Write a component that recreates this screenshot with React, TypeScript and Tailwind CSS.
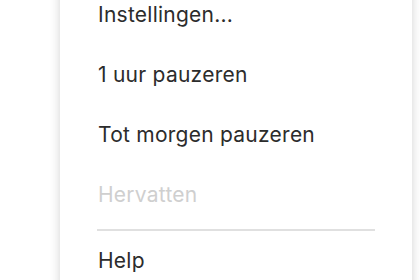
import React from "react";

const items = [
  { label: "Instellingen...", disabled: false },
  { label: "1 uur pauzeren", disabled: false },
  { label: "Tot morgen pauzeren", disabled: false },
  { label: "Hervatten", disabled: true },
];

const MenuItem = ({ label, disabled }: { label: string; disabled?: boolean }) => (
  <div
    className={`h-[60px] flex items-center pl-[38px] text-[21px] tracking-[0.25px] ${
      disabled ? "text-[#cfcfcf]" : "text-[#2c2c2c]"
    }`}
  >
    {label}
  </div>
);

export default function App() {
  return (
    <div
      className="w-[420px] h-[280px] overflow-hidden bg-white"
      style={{ fontFamily: "Inter, 'Noto Sans', sans-serif" }}
    >
      <div className="ml-[60px] w-[352px] -mt-[15px] pb-[40px] bg-white shadow-[0_0_10px_rgba(0,0,0,0.18)]">
        {/* menu entries */}
        {items.map((it) => (
          <MenuItem key={it.label} label={it.label} disabled={it.disabled} />
        ))}
        <div className="ml-[37px] mr-[37px] mt-[4px] h-[2px] bg-[#e0e0e0]" />
        <MenuItem label="Help" />
      </div>
    </div>
  );
}
